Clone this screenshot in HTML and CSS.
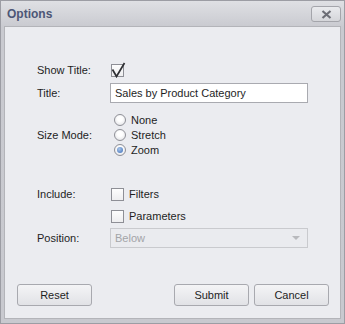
FILE: index.html
```html
<!DOCTYPE html>
<html lang="en">
<head>
    <meta charset="UTF-8">
    <title>Options</title>
    <link rel="stylesheet" href="styles.css">
</head>
<body>
    <div class="window">
        <div class="titlebar">
            <span class="caption">Options</span>
            <button class="close-btn" title="Close">
                <svg width="11" height="9" viewBox="0 0 11 9">
                    <path d="M1.5 1 L9.5 8 M9.5 1 L1.5 8" stroke="#6c6d75" stroke-width="2.2"/>
                </svg>
            </button>
        </div>

        <div class="content">
            <div class="row">
                <span class="label">Show Title:</span>
                <span class="check checked">
                    <svg width="16" height="16" viewBox="0 0 16 16">
                        <path d="M2.5 7.5 L6.5 14.5 L14.5 1" fill="none" stroke="#2e2f33" stroke-width="1.7"/>
                    </svg>
                </span>
            </div>

            <div class="row row-input">
                <span class="label">Title:</span>
                <div class="textbox">Sales by Product Category</div>
            </div>

            <div class="row row-radios">
                <span class="label">Size Mode:</span>
                <div class="radios">
                    <div class="radio-item"><span class="radio"></span>None</div>
                    <div class="radio-item"><span class="radio"></span>Stretch</div>
                    <div class="radio-item"><span class="radio selected"></span>Zoom</div>
                </div>
            </div>

            <div class="row row-include">
                <span class="label">Include:</span>
                <div class="check-item"><span class="check"></span>Filters</div>
            </div>

            <div class="row row-params">
                <span class="label"></span>
                <div class="check-item"><span class="check"></span>Parameters</div>
            </div>

            <div class="row row-input">
                <span class="label">Position:</span>
                <div class="combo">
                    <span>Below</span>
                    <span class="arrow"></span>
                </div>
            </div>

            <div class="buttons">
                <button class="btn">Reset</button>
                <span class="spacer"></span>
                <button class="btn">Submit</button>
                <button class="btn">Cancel</button>
            </div>
        </div>
    </div>
</body>
</html>
```

FILE: styles.css
```css
body {
    margin: 0;
    font-family: 'Liberation Sans', Arial, sans-serif;
    font-size: 11px;
    color: #1e1e1e;
}
.window {
    width: 345px;
    height: 324px;
    box-sizing: border-box;
    border: 1px solid #9c9da4;
    background: linear-gradient(#dfe0e4, #c9cad0 26px, #c8c9cf);
    display: flex;
    flex-direction: column;
}
.titlebar {
    height: 25px;
    display: flex;
    align-items: center;
    justify-content: space-between;
    padding: 0 3px 0 6px;
}
.caption {
    font-size: 12px;
    font-weight: bold;
    color: #4d5676;
    margin-top: 1px;
}
.close-btn {
    width: 30px;
    height: 16px;
    margin-top: 1px;
    border: 1px solid #a4a5ab;
    border-radius: 3px;
    background: linear-gradient(#eaebee, #d5d6da);
    display: flex;
    align-items: center;
    justify-content: center;
    padding: 0;
}
.content {
    flex: 1;
    margin: 0 3px 4px;
    border: 1px solid #b3b4b9;
    background-color: #ebecf0;
    padding: 33px 32px 12px 32px;
    display: flex;
    flex-direction: column;
}
.row {
    display: flex;
    align-items: center;
    height: 20px;
}
.label {
    width: 73px;
    flex: none;
}
.row-input {
    margin-top: 3px;
}
.row-radios {
    margin-top: 9px;
    height: 45px;
}
.row-include {
    margin-top: 27px;
}
.row-params {
    margin-top: 2px;
}
.row-params + .row-input {
    margin-top: 2px;
}
.check {
    width: 11px;
    height: 11px;
    border: 1px solid #8e8f96;
    background: linear-gradient(#fdfdfd, #eeeef0);
    margin-left: 1px;
    position: relative;
    flex: none;
}
.check.checked svg {
    position: absolute;
    left: -2px;
    top: -3px;
}
.check-item {
    display: flex;
    align-items: center;
}
.check-item .check {
    margin-right: 5px;
}
.textbox, .combo {
    flex: 1;
    height: 20px;
    box-sizing: border-box;
    border: 1px solid #a9aab0;
    background-color: white;
    padding: 0 4px;
    display: flex;
    align-items: center;
}
.combo {
    border-color: #c9cace;
    background-color: #eaebef;
    color: #a3a4a8;
    justify-content: space-between;
}
.arrow {
    width: 0;
    height: 0;
    border-left: 4px solid transparent;
    border-right: 4px solid transparent;
    border-top: 4px solid #b8b9bd;
    margin-right: 3px;
}
.radios {
    display: flex;
    flex-direction: column;
    margin-left: 4px;
}
.radio-item {
    height: 15px;
    display: flex;
    align-items: center;
}
.radio {
    width: 10px;
    height: 10px;
    border-radius: 50%;
    border: 1px solid #8f9097;
    background: radial-gradient(circle at 50% 40%, #ffffff 30%, #dcdde1);
    margin-right: 5px;
    position: relative;
}
.radio.selected::after {
    content: "";
    position: absolute;
    left: 2px;
    top: 2px;
    width: 6px;
    height: 6px;
    border-radius: 50%;
    background: radial-gradient(circle at 40% 35%, #a9c6ea, #3a6ab5);
}
.buttons {
    margin: auto -21px 0 -20px;
    display: flex;
    gap: 5px;
}
.spacer {
    flex: 1;
}
.btn {
    width: 75px;
    height: 22px;
    font-family: inherit;
    font-size: 11px;
    color: #1e1e1e;
    border: 1px solid #a8a9af;
    border-radius: 3px;
    background: linear-gradient(#f4f4f6, #e1e2e6);
    padding: 0;
}
```
